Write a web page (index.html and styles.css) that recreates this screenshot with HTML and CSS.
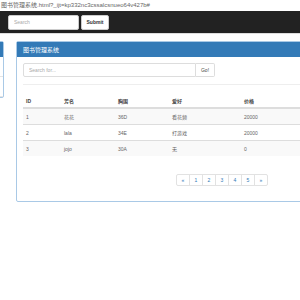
FILE: index.html
```html
<!DOCTYPE html>
<html lang="zh-CN">
<head>
  <meta charset="UTF-8" />
  <title>图书管理系统</title>
  <link rel="stylesheet" href="styles.css">
</head>
<body>
  <div class="url-bar">图书管理系统.html?_ijt=kp332nc3cssalcsnueo64v427b#</div>
  <div class="navbar">
    <input class="nav-search" type="text" placeholder="Search">
    <button class="nav-submit">Submit</button>
  </div>
  <div class="content">
    <div class="side-panel">
      <div class="side-heading"></div>
      <div class="side-item"></div>
      <div class="side-item"></div>
    </div>
    <div class="panel">
      <div class="panel-heading">图书管理系统</div>
      <div class="panel-body">
        <div class="input-group">
          <input class="search-input" type="text" placeholder="Search for...">
          <button class="go-btn">Go!</button>
        </div>
        <hr class="divider">
        <table class="book-table">
          <thead>
            <tr><th class="c-id">ID</th><th class="c-name">芳名</th><th class="c-size">胸围</th><th class="c-hobby">爱好</th><th>价格</th></tr>
          </thead>
          <tbody>
            <tr><td>1</td><td>花花</td><td>36D</td><td>看花频</td><td>20000</td></tr>
            <tr><td>2</td><td>lala</td><td>34E</td><td>打游戏</td><td>20000</td></tr>
            <tr><td>3</td><td>jojo</td><td>30A</td><td>无</td><td>0</td></tr>
          </tbody>
        </table>
        <ul class="pagination">
          <li>«</li><li>1</li><li>2</li><li>3</li><li>4</li><li>5</li><li>»</li>
        </ul>
      </div>
    </div>
  </div>
</body>
</html>
```
FILE: styles.css
```css
html, body {
  margin: 0;
  padding: 0;
  background: #fff;
  font-family: 'Liberation Sans', 'Noto Sans CJK SC', sans-serif;
  color: #333;
  overflow: hidden;
}
.url-bar {
  height: 10px;
  line-height: 10px;
  font-size: 6px;
  color: #666;
  padding-left: 1px;
  white-space: nowrap;
}
.navbar {
  margin-top: 1px;
  height: 22px;
  background: #222;
  border-bottom: 1px solid #ddd;
  display: flex;
  align-items: center;
  padding: 0 8px;
  gap: 2px;
}
.nav-search {
  box-sizing: border-box;
  width: 71px;
  height: 15px;
  border: 1px solid #ccc;
  border-radius: 2px;
  font-size: 5px;
  padding: 0 5px;
  font-family: inherit;
}
.nav-search::placeholder { color: #aaa; }
.nav-submit {
  box-sizing: border-box;
  width: 28px;
  height: 15px;
  border: 1px solid #ccc;
  border-radius: 2px;
  background: #fff;
  font-size: 5px;
  font-weight: bold;
  font-family: inherit;
  color: #333;
  padding: 0;
}
.content {
  display: flex;
  align-items: flex-start;
  margin-top: 7px;
  overflow: hidden;
}
.side-panel {
  width: 60px;
  margin-left: -58px;
  border: 1px solid #a9c9e6;
  border-radius: 2px;
  flex-shrink: 0;
}
.side-heading {
  height: 15px;
  background: #337ab7;
}
.side-item {
  height: 19px;
  border-bottom: 1px solid #e4e4e4;
}
.panel {
  margin-left: 12px;
  width: 300px;
  flex-shrink: 0;
  border: 1px solid #a9c9e6;
  border-radius: 2px;
}
.panel-heading {
  height: 15px;
  line-height: 15px;
  background: #337ab7;
  color: #fff;
  font-size: 6px;
  padding-left: 6px;
  font-family: 'Noto Sans CJK SC', sans-serif;
}
.panel-body {
  padding: 6px 6px 15px;
}
.input-group {
  display: flex;
  width: 192px;
  height: 14px;
}
.search-input {
  box-sizing: border-box;
  width: 173px;
  height: 14px;
  border: 1px solid #ddd;
  border-radius: 2px 0 0 2px;
  font-size: 5px;
  padding: 0 5px;
  font-family: inherit;
}
.search-input::placeholder { color: #aaa; }
.go-btn {
  box-sizing: border-box;
  width: 19px;
  height: 14px;
  border: 1px solid #ddd;
  border-left: none;
  border-radius: 0 2px 2px 0;
  background: #fff;
  font-size: 5px;
  color: #444;
  padding: 0;
  font-family: inherit;
}
.divider {
  border: none;
  border-top: 1px solid #eee;
  margin: 7px 0 9px;
}
.book-table {
  width: 100%;
  border-collapse: collapse;
  font-size: 5px;
}
.book-table th {
  text-align: left;
  font-weight: bold;
  height: 13px;
  padding: 0 3px;
  border-bottom: 2px solid #ddd;
  color: #444;
}
.book-table td {
  height: 15px;
  padding: 0 3px;
  border-top: 1px solid #ddd;
  color: #666;
}
.book-table tbody tr:nth-child(odd) { background: #f9f9f9; }
.c-id { width: 32px; }
.c-name { width: 48px; }
.c-size { width: 48px; }
.c-hobby { width: 66px; }
.pagination {
  list-style: none;
  margin: 18px 0 0 153px;
  padding: 0;
  display: flex;
}
.pagination li {
  box-sizing: border-box;
  width: 14px;
  height: 12px;
  line-height: 11px;
  text-align: center;
  font-size: 5px;
  color: #337ab7;
  border: 1px solid #e2e2e2;
  margin-left: -1px;
}
.pagination li:first-child { border-radius: 2px 0 0 2px; margin-left: 0; }
.pagination li:last-child { border-radius: 0 2px 2px 0; }
```
